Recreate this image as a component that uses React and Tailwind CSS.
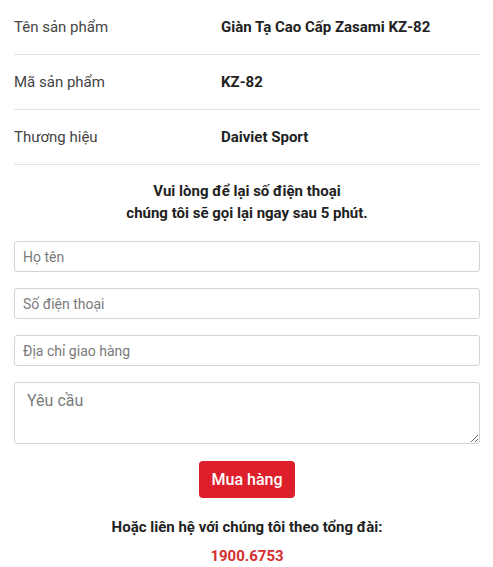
import React from 'react';

const specs = [
    { label: 'Tên sản phẩm', value: 'Giàn Tạ Cao Cấp Zasami KZ-82' },
    { label: 'Mã sản phẩm', value: 'KZ-82' },
    { label: 'Thương hiệu', value: 'Daiviet Sport' },
];

const inputCls =
    'w-full h-[31px] px-[8px] border border-[#d4d4d4] rounded-[3px] text-[14px] text-[#333] placeholder:text-[#7a7a7a] outline-none bg-white';

const App = () => {
    return (
        <div className="w-[493px] min-h-[567px] bg-white pl-[14px] pr-[13px] text-[15px] text-[#333]" style={{ fontFamily: 'Roboto, "Noto Sans", sans-serif' }}>
            <div>
                {specs.map((s) => (
                    <div key={s.label} className="flex items-center h-[55px] border-b border-[#e3e3e3]">
                        <div className="w-[207px] text-[#444]">{s.label}</div>
                        <div className="font-bold text-[#222]">{s.value}</div>
                    </div>
                ))}
            </div>

            <p className="mt-[15px] text-center font-bold leading-[22px] text-[#222]">
                Vui lòng để lại số điện thoại
                <br />
                chúng tôi sẽ gọi lại ngay sau 5 phút.
            </p>

            <form className="mt-[17px] flex flex-col gap-[16px]" onSubmit={(e) => e.preventDefault()}>
                <input className={inputCls} placeholder="Họ tên" />
                <input className={inputCls} placeholder="Số điện thoại" />
                <input className={inputCls} placeholder="Địa chỉ giao hàng" />
                <textarea
                    className="w-full h-[62px] px-[12px] py-[6px] border border-[#d4d4d4] rounded-[3px] text-[16px] leading-[24px] text-[#333] placeholder:text-[#7a7a7a] outline-none bg-white block"
                    placeholder="Yêu cầu"
                />
                <div className="flex justify-center mt-[1px]">
                    <button type="submit" className="w-[96px] h-[37px] bg-[#dc1f2b] text-white text-[16px] font-medium rounded-[4px]">
                        Mua hàng
                    </button>
                </div>
            </form>

            <p className="mt-[19px] text-center font-bold text-[#222] leading-[20px]">Hoặc liên hệ với chúng tôi theo tổng đài:</p>
            <p className="mt-[9px] text-center font-bold text-[#d32f2f] leading-[20px]">1900.6753</p>
        </div>
    );
};

export default App;
